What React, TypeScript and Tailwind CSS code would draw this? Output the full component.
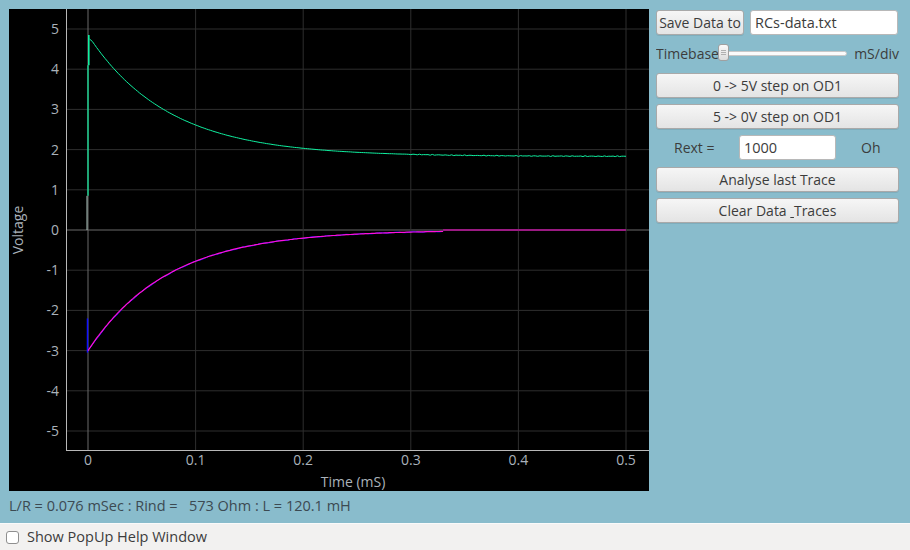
import React from "react";

const X0 = 79; // t = 0 inside the plot svg
const PX_MS = 1076;
const Y0 = 221; // V = 0
const PX_V = 40.2;

const sx = (t: number) => X0 + t * PX_MS;
const sy = (v: number) => Y0 - v * PX_V;

const TAU = 0.074;

function makePath(fn: (t: number) => number, from: number, to: number, step = 0.002) {
  let d = "";
  for (let t = from; t <= to + 1e-9; t += step) {
    d += (d ? " L" : "M") + sx(t).toFixed(1) + " " + sy(fn(t)).toFixed(1);
  }
  return d;
}

const greenFn = (t: number) =>
  1.83 + 3.02 * Math.exp(-t / TAU) + (t > 0.3 ? Math.sin(t * 1370) * Math.sin(t * 310) * 0.012 : 0);
const magentaFn = (t: number) => -3.0 * Math.exp(-t / TAU);
const blueFn = (t: number) => -3.02 * Math.exp(-t / TAU) + Math.sin(t * 400) * 0.01;

const Plot = () => {
  const yTicks = [5, 4, 3, 2, 1, 0, -1, -2, -3, -4, -5];
  const xTicks = [0, 0.1, 0.2, 0.3, 0.4, 0.5];
  const font = "'Open Sans', sans-serif";
  return (
    <div className="w-[640px] h-[482px] bg-black">
      <svg width="640" height="482" viewBox="0 0 640 482">
        {yTicks.map((v) => (
          <line
            key={"h" + v}
            x1={57}
            x2={640}
            y1={sy(v)}
            y2={sy(v)}
            stroke={v === 0 ? "#6a6a6a" : "#2e2e2e"}
            strokeWidth={1}
          />
        ))}
        {xTicks.map((t) => (
          <line
            key={"v" + t}
            x1={sx(t)}
            x2={sx(t)}
            y1={0}
            y2={442}
            stroke={t === 0 ? "#6a6a6a" : "#2e2e2e"}
            strokeWidth={1}
          />
        ))}
        <line x1={57.5} x2={57.5} y1={0} y2={442} stroke="#b8b8b8" strokeWidth={1} />
        <line x1={57} x2={640} y1={441.5} y2={441.5} stroke="#b8b8b8" strokeWidth={1} />

        {yTicks.map((v) => (
          <text key={"yl" + v} x={50} y={sy(v) + 5} textAnchor="end" fill="#aab2ba" fontSize="14" fontFamily={font}>
            {v}
          </text>
        ))}
        {xTicks.map((t) => (
          <text key={"xl" + t} x={sx(t)} y={456} textAnchor="middle" fill="#aab2ba" fontSize="14" fontFamily={font}>
            {t}
          </text>
        ))}
        <text x={344} y={478} textAnchor="middle" fill="#aab2ba" fontSize="14" fontFamily={font}>
          Time (mS)
        </text>
        <text
          x={0}
          y={0}
          transform="translate(14 221) rotate(-90)"
          textAnchor="middle"
          fill="#aab2ba"
          fontSize="14"
          fontFamily={font}
        >
          Voltage
        </text>

        {/* zero trace */}
        <line x1={sx(0.33)} x2={sx(0.5)} y1={Y0} y2={Y0} stroke="#ff00d0" strokeWidth={1} />

        {/* blue trace */}
        <path d={makePath(blueFn, 0.002, 0.33)} stroke="#1010ff" strokeWidth={1} fill="none" />
        <line x1={78.5} x2={78.5} y1={sy(-2.2)} y2={sy(-3.05)} stroke="#1010ff" strokeWidth={1.5} />
        <path d={makePath(magentaFn, 0.0, 0.33)} stroke="#ff10d8" strokeWidth={1.2} fill="none" />

        {/* green trace */}
        <line x1={78} x2={78} y1={Y0} y2={sy(0.85)} stroke="#b0c8c0" strokeWidth={1} />
        <line x1={79} x2={79} y1={sy(0.85)} y2={sy(4.1)} stroke="#10f0a0" strokeWidth={1.2} />
        <line x1={79.8} x2={79.8} y1={sy(4.1)} y2={sy(4.85)} stroke="#10f0a0" strokeWidth={1.6} />
        <path
          d={"M80.5 " + sy(4.75).toFixed(1) + " " + makePath(greenFn, 0.004, 0.5).replace("M", "L")}
          stroke="#10f0a0"
          strokeWidth={1}
          fill="none"
        />
      </svg>
    </div>
  );
};

const Button = ({ children, className = "" }: { children: React.ReactNode; className?: string }) => (
  <button
    className={
      "h-[25px] rounded-[3px] border border-[#a9a9a9] bg-gradient-to-b from-[#f6f6f6] to-[#e4e4e4] text-[14px] text-[#3c3c3c] leading-none shadow-[0_1px_0_rgba(0,0,0,0.08)] " +
      className
    }
  >
    {children}
  </button>
);

const Input = ({ value, className = "" }: { value: string; className?: string }) => (
  <div
    className={
      "h-[25px] rounded-[3px] border border-[#b8b8b8] bg-white px-[4px] flex items-center text-[14.5px] text-[#3c3c3c] " +
      className
    }
  >
    {value}
  </div>
);

export default function App() {
  return (
    <div
      className="w-[910px] h-[550px] bg-[#89bccc] flex flex-col overflow-hidden text-[#3c3c3c]"
      style={{ fontFamily: "'Open Sans', 'DejaVu Sans', sans-serif" }}
    >
      <div className="flex flex-1 pt-[9px] pl-[9px]">
        <div className="flex flex-col">
          <Plot />
          <div className="mt-[5px] text-[14.5px] text-[#3c4a52] whitespace-pre leading-[20px]">
            {"L/R = 0.076 mSec : Rind =   573 Ohm : L = 120.1 mH"}
          </div>
        </div>
        <div className="ml-[7px] w-[243px] flex flex-col">
          <div className="flex items-center mt-[1px]">
            <Button className="w-[88px] px-0">Save Data to</Button>
            <Input value="RCs-data.txt" className="ml-[6px] w-[148px]" />
          </div>
          <div className="flex items-center mt-[8px] h-[20px]">
            <div className="w-[62px] overflow-hidden whitespace-nowrap text-[14px]">Timebase</div>
            <div className="relative w-[129px] h-[20px] flex items-center">
              <div className="absolute left-[4px] right-0 h-[5px] rounded-full bg-[#fbfbfb] border border-[#c8c8c8]" />
              <div className="absolute left-0 top-[1px] w-[11px] h-[17px] rounded-[3px] border border-[#a0a0a0] bg-gradient-to-b from-[#fafafa] to-[#dcdcdc] flex flex-col items-center justify-center gap-[1px]">
                <div className="w-[5px] h-px bg-[#b0b0b0]" />
                <div className="w-[5px] h-px bg-[#b0b0b0]" />
                <div className="w-[5px] h-px bg-[#b0b0b0]" />
              </div>
            </div>
            <div className="ml-auto text-[14px]">mS/div</div>
          </div>
          <Button className="mt-[10px] w-full">0 -&gt; 5V step on OD1</Button>
          <Button className="mt-[6px] w-full">5 -&gt; 0V step on OD1</Button>
          <div className="flex items-center mt-[6px] h-[25px]">
            <div className="w-[83px] pl-[18px] text-[14px]">Rext =</div>
            <Input value="1000" className="w-[97px] px-[3px]" />
            <div className="ml-[25px] text-[14px]">Oh</div>
          </div>
          <Button className="mt-[7px] w-full">Analyse last Trace</Button>
          <Button className="mt-[6px] w-full">
            Clear Data <span className="underline decoration-[#3c3c3c]">&nbsp;</span>Traces
          </Button>
        </div>
      </div>
      <div className="h-[27px] bg-[#f2f1f0] border-t border-[#fafafa] flex items-center pl-[6px]">
        <div className="w-[13px] h-[13px] rounded-[3px] border border-[#8f8f8f] bg-white" />
        <div className="ml-[8px] text-[14.5px] text-[#3c3c3c]">Show PopUp Help Window</div>
      </div>
    </div>
  );
}
